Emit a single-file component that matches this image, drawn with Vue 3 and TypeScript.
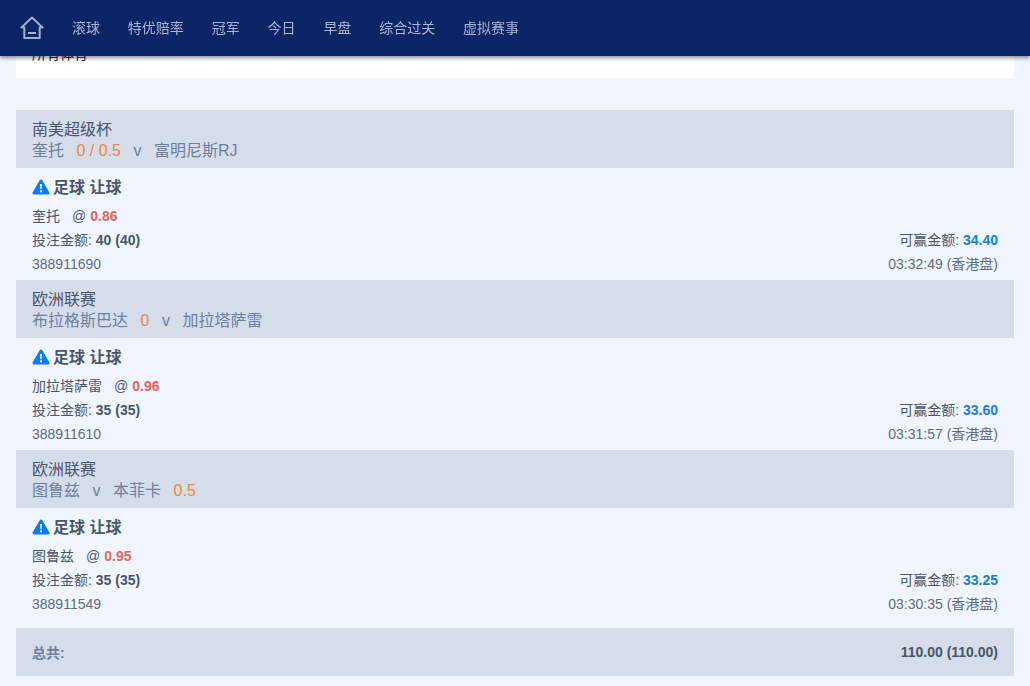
<script setup lang="ts">
interface Bet {
  league: string
  teams: { text: string; hdp?: boolean }[]
  pick: string
  odds: string
  stake: string
  win: string
  id: string
  time: string
}
const nav = ['滚球', '特优赔率', '冠军', '今日', '早盘', '综合过关', '虚拟赛事']
const bets: Bet[] = [
  {
    league: '南美超级杯',
    teams: [{ text: '奎托' }, { text: '0 / 0.5', hdp: true }, { text: 'v' }, { text: '富明尼斯RJ' }],
    pick: '奎托',
    odds: '0.86',
    stake: '40 (40)',
    win: '34.40',
    id: '388911690',
    time: '03:32:49 (香港盘)',
  },
  {
    league: '欧洲联赛',
    teams: [{ text: '布拉格斯巴达' }, { text: '0', hdp: true }, { text: 'v' }, { text: '加拉塔萨雷' }],
    pick: '加拉塔萨雷',
    odds: '0.96',
    stake: '35 (35)',
    win: '33.60',
    id: '388911610',
    time: '03:31:57 (香港盘)',
  },
  {
    league: '欧洲联赛',
    teams: [{ text: '图鲁兹' }, { text: 'v' }, { text: '本菲卡' }, { text: '0.5', hdp: true }],
    pick: '图鲁兹',
    odds: '0.95',
    stake: '35 (35)',
    win: '33.25',
    id: '388911549',
    time: '03:30:35 (香港盘)',
  },
]
</script>

<template>
  <div class="page">
    <header class="topbar">
      <svg class="home" width="24" height="24" viewBox="0 0 24 24" fill="none" stroke="currentColor" stroke-width="2" stroke-linejoin="round">
        <path d="M1.500 11.500 12 1.500l10.500 10H19.700V22H4.300V11.500Z" />
        <path d="M8 17h8" />
      </svg>
      <nav class="nav">
        <span v-for="item in nav" :key="item">{{ item }}</span>
      </nav>
    </header>

    <main class="main">
      <div class="select">
        <span>所有体育</span>
        <svg class="chevron" width="10" height="10" viewBox="0 0 10 10" fill="none" stroke="#0b1f4d" stroke-width="1.500"><path d="M1.500 3 5 7l3.500-4" /></svg>
      </div>

      <section v-for="bet in bets" :key="bet.id">
        <div class="head">
          <div class="league">{{ bet.league }}</div>
          <div class="teams">
            <span v-for="t in bet.teams" :key="t.text" :class="{ hdp: t.hdp }">{{ t.text }}</span>
          </div>
        </div>
        <div class="bet">
          <div class="title">
            <svg class="warn" width="18" height="16" viewBox="0 0 18 16"><path fill="#0a7cf5" stroke="#0a7cf5" stroke-width="3" stroke-linejoin="round" d="M9 2 16 14H2Z" /><path fill="#fff" d="M8.100 5h1.800l-.3 5.200H8.400ZM8.100 11.300h1.800v1.900H8.100Z" /></svg>
            <span>足球 让球</span>
          </div>
          <div class="row">
            <span>{{ bet.pick }}<span class="at">@</span><b class="odds">{{ bet.odds }}</b></span>
          </div>
          <div class="row">
            <span>投注金额: <b>{{ bet.stake }}</b></span>
            <span>可赢金额: <b class="win">{{ bet.win }}</b></span>
          </div>
          <div class="row light">
            <span>{{ bet.id }}</span>
            <span>{{ bet.time }}</span>
          </div>
        </div>
      </section>

      <div class="total">
        <b class="label">总共:</b>
        <b>110.00 (110.00)</b>
      </div>
    </main>
  </div>
</template>

<style>
html, body { margin: 0; background: #f0f5ff; }
</style>

<style scoped>
.page {
  font-family: "Liberation Sans", "Noto Sans CJK SC", sans-serif;
  font-size: 14px;
  color: #4a5568;
  height: 686px;
  overflow: hidden;
  background: #f0f5ff;
}
.topbar {
  position: fixed;
  top: 0;
  left: 0;
  right: 0;
  z-index: 2;
  height: 56px;
  display: flex;
  align-items: center;
  padding-left: 20px;
  background: #0b2566;
  color: #a9b5cf;
  box-shadow: 0 2px 4px rgba(0, 0, 0, .45);
}
.home { flex: none; color: #a3b1cf; }
.nav { display: flex; gap: 27.85px; margin-left: 28px; line-height: 56px; }
.main { padding: 30px 16px 10px; }
.select {
  height: 48px;
  padding: 0 20px 2px 16px;
  box-sizing: border-box;
  display: flex;
  align-items: center;
  justify-content: space-between;
  background: #fff;
  border-radius: 2px;
  color: #1a202c;
  margin-bottom: 32px;
}
.chevron { margin-bottom: 4px; }
.head {
  height: 58px;
  padding: 10px 16px 0;
  box-sizing: border-box;
  background: #d5dcea;
  font-size: 16px;
  line-height: 20px;
}
.league { color: #4a5568; }
.teams { display: flex; gap: 12.500px; color: #6f7f9c; padding-top: 1px; }
.hdp { color: #ed8936; }
.bet { height: 112px; padding: 0 16px; box-sizing: border-box; }
.title {
  height: 36px;
  display: flex;
  align-items: center;
  gap: 3px;
  font-size: 16px;
  font-weight: 700;
}
.warn { margin-top: 2px; }
.row {
  display: flex;
  justify-content: space-between;
  height: 24px;
  line-height: 24px;
}
.light { color: #5f6b7d; }
.at { margin: 0 4px 0 12px; }
.odds { color: #e5655d; }
.win { color: #1480e0; }
.total {
  margin-top: 8px;
  height: 48px;
  display: flex;
  align-items: center;
  justify-content: space-between;
  padding: 0 16px;
  background: #d5dcea;
}
.label { color: #6f7f9c; }
</style>
